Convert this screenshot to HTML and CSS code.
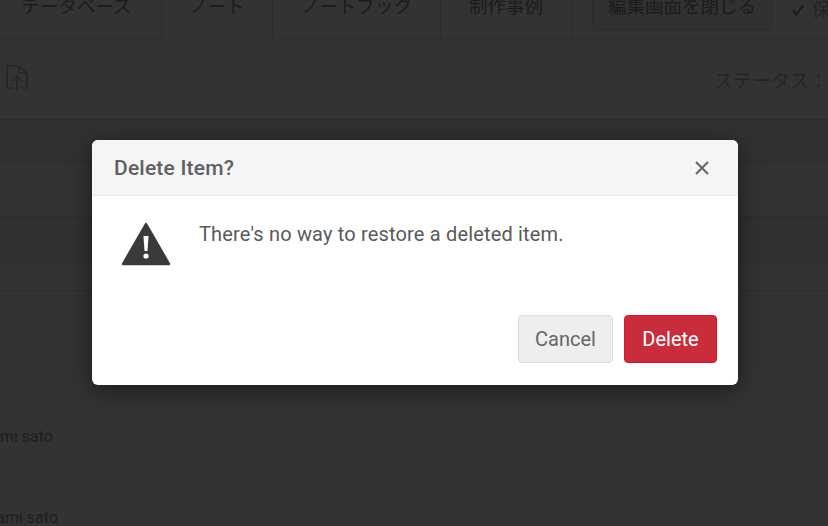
FILE: index.html
```html
<!DOCTYPE html>
<html lang="en">
<head>
    <meta charset="UTF-8">
    <meta name="viewport" content="width=device-width, initial-scale=1.0">
    <title>Delete Item</title>
    <link rel="stylesheet" href="styles.css">
</head>
<body>

    <div class="page">
        <!-- Tabs -->
        <div class="tabs">
            <div class="tab tab-db">データベース</div>
            <div class="tab tab-note active">ノート</div>
            <div class="tab tab-book">ノートブック</div>
            <div class="tab tab-cases">制作事例</div>
            <button class="close-edit">編集画面を閉じる</button>
            <div class="saved">
                <svg width="14" height="14" viewBox="0 0 14 14"><path d="M2 7.5l3.5 4L12 2.5" fill="none" stroke="#888" stroke-width="2"/></svg>
                <span>保存</span>
            </div>
        </div>

        <!-- Toolbar -->
        <div class="toolbar">
            <svg class="upload" width="24" height="28" viewBox="0 0 24 28" fill="none" stroke="#b4b4b4" stroke-width="1.6">
                <path d="M8 24H2V2h12l8 7v15h-6"/>
                <path d="M14 2v7h8"/>
                <path d="M12 27V12M7 17l5-5 5 5"/>
            </svg>
            <div class="status">ステータス：</div>
        </div>

        <!-- Rows -->
        <div class="row row-a"></div>
        <div class="row row-b"></div>
        <div class="row row-c"></div>
        <div class="row row-d"></div>

        <div class="names">
            <div class="name name-first">Satomi sato</div>
            <div class="name name-second">Masami sato</div>
        </div>
    </div>

    <!-- Dialog -->
    <div class="overlay">
        <div class="modal">
            <div class="modal-header">
                <h2 class="modal-title">Delete Item?</h2>
                <svg class="modal-close" width="14" height="14" viewBox="0 0 14 14"><path d="M1 1l12 12M13 1L1 13" stroke="#666" stroke-width="2"/></svg>
            </div>
            <div class="modal-body">
                <svg class="warning" width="50" height="44" viewBox="0 0 50 44">
                    <path d="M25 2L48 42H2Z" fill="#3a3a3a" stroke="#3a3a3a" stroke-width="2.5" stroke-linejoin="round"/>
                    <path d="M22.5 14h5l-1 15h-3Z" fill="#fff"/>
                    <circle cx="25" cy="34" r="2.6" fill="#fff"/>
                </svg>
                <p class="modal-text">There's no way to restore a deleted item.</p>
            </div>
            <div class="modal-footer">
                <button class="btn btn-cancel">Cancel</button>
                <button class="btn btn-delete">Delete</button>
            </div>
        </div>
    </div>

</body>
</html>
```

FILE: styles.css
```css
* {
    box-sizing: border-box;
}

html,
body {
    margin: 0;
    height: 100%;
    overflow: hidden;
}

body {
    font-family: Roboto, "Noto Sans CJK JP", sans-serif;
    position: relative;
}

.page {
    height: 526px;
    background-color: #fff;
    color: #888;
    overflow: hidden;
}

/* Tabs, cut off by the top of the window */
.tabs {
    display: flex;
    align-items: flex-start;
    height: 39px;
    border-bottom: 1px solid #ddd;
    white-space: nowrap;
}

.tab {
    flex-shrink: 0;
    height: 39px;
    font-size: 18.5px;
    line-height: 14px;
    text-align: center;
    border-right: 1px solid #ddd;
}

.tab.active {
    background-color: #fff;
    border-bottom: 1px solid #fff;
}

.tab-db {
    width: 162px;
    padding-right: 8px;
}

.tab-note {
    width: 111px;
}

.tab-book {
    width: 168px;
}

.tab-cases {
    width: 131px;
}

.close-edit {
    flex-shrink: 0;
    width: 180px;
    height: 30px;
    margin-left: 20px;
    padding: 0;
    font-family: inherit;
    font-size: 18.5px;
    line-height: 14px;
    color: #888;
    background-color: #f4f4f4;
    border: 1px solid #ddd;
    border-top: none;
    border-radius: 0 0 4px 4px;
    display: flex;
    justify-content: center;
    align-items: flex-start;
}

.saved {
    flex-shrink: 0;
    display: flex;
    align-items: center;
    gap: 7px;
    margin-left: 19px;
    margin-top: 1px;
    font-size: 18px;
    line-height: 18px;
    color: #aaa;
}

.toolbar {
    display: flex;
    justify-content: space-between;
    align-items: center;
    height: 81px;
    padding-left: 5px;
    border-bottom: 1px solid #ddd;
}

.upload {
    margin-top: -2px;
}

.status {
    flex-shrink: 0;
    width: 114px;
    font-size: 19px;
    white-space: nowrap;
    color: #b0b0b0;
}

.row {
    border-bottom: 1px solid #ddd;
}

.row-a {
    height: 42px;
    background-color: #f4f4f4;
}

.row-b {
    height: 55px;
}

.row-c {
    height: 46px;
    background-color: #f4f4f4;
}

.row-d {
    height: 28px;
}

/* Names, cut off by the left of the window */
.names {
    padding-top: 136px;
    font-size: 16px;
    line-height: 20px;
    color: #999;
}

.name {
    display: flex;
    justify-content: flex-end;
    overflow: hidden;
    white-space: nowrap;
}

.name-first {
    width: 53px;
}

.name-second {
    width: 58px;
    margin-top: 61px;
}

.overlay {
    position: absolute;
    top: 0;
    left: 0;
    right: 0;
    bottom: 0;
    padding: 140px 90px 0 92px;
    background-color: rgba(0, 0, 0, 0.8);
}

.modal {
    height: 245px;
    display: flex;
    flex-direction: column;
    border-radius: 6px;
    background-color: #fff;
    box-shadow: 0 5px 25px rgba(0, 0, 0, 0.5);
    overflow: hidden;
}

.modal-header {
    display: flex;
    justify-content: space-between;
    align-items: center;
    height: 56px;
    padding: 0 29px 0 22px;
    background-color: #f5f5f5;
    border-bottom: 1px solid #e8e8e8;
}

.modal-title {
    margin: 0;
    font-size: 21px;
    font-weight: 500;
    letter-spacing: 0.2px;
    color: #606060;
}

.modal-body {
    display: flex;
    align-items: flex-start;
    flex: 1;
    padding: 26px 0 0 29px;
}

.warning {
    flex-shrink: 0;
}

.modal-text {
    margin: 0 0 0 28px;
    font-size: 20px;
    line-height: 24px;
    letter-spacing: 0.17px;
    color: #5a5a5a;
}

.modal-footer {
    display: flex;
    justify-content: flex-end;
    gap: 11px;
    padding: 0 21px 22px 0;
}

.btn {
    height: 48px;
    padding: 0;
    font-family: inherit;
    font-size: 20px;
    border-radius: 4px;
}

.btn-cancel {
    width: 95px;
    color: #666;
    background-color: #eee;
    border: 1px solid #ddd;
}

.btn-delete {
    width: 93px;
    color: #fff;
    background-color: #c92c3a;
    border: 1px solid #e0141f;
}
```
